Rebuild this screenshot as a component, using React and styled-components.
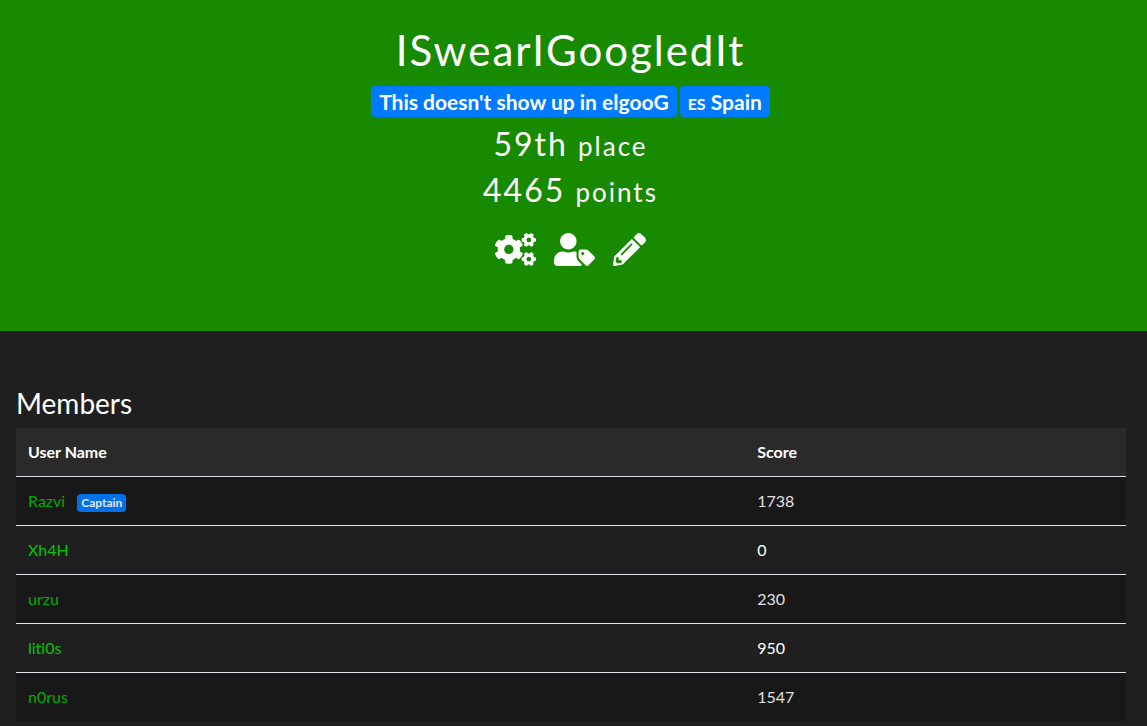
import React from "react";
import styled, { createGlobalStyle } from "styled-components";
import { FaCogs, FaUserTag, FaPencilAlt } from "react-icons/fa";

const GlobalStyle = createGlobalStyle`
  *, *::before, *::after { box-sizing: border-box; }
  body {
    margin: 0;
    background: #1f1f1f;
    color: #fff;
    font-family: Lato, "Liberation Sans", sans-serif;
    font-size: 16px;
    line-height: 24px;
    font-variant-ligatures: none;
  }
`;

const Hero = styled.header`
  display: flex;
  flex-direction: column;
  align-items: center;
  padding: 26px 22px 65px 16px;
  background: #178a00;
`;

const TeamName = styled.h1`
  margin: 0 0 12px;
  font-size: 42px;
  font-weight: 400;
  line-height: 48px;
  letter-spacing: 2px;
`;

const Badges = styled.div`
  display: flex;
  gap: 3px;
  margin-bottom: 8px;
`;

const Badge = styled.span`
  display: inline-block;
  padding: ${(p) => (p.$small ? "3px 4px" : "5px 8px")};
  border-radius: 4px;
  background: ${(p) => (p.$small ? "#0070e8" : "#007bff")};
  color: ${(p) => (p.$small ? "#e0e8f0" : "#fff")};
  font-size: ${(p) => (p.$small ? "12px" : "21px")};
  font-weight: 700;
  line-height: ${(p) => (p.$small ? "12px" : "21px")};
  white-space: nowrap;
`;

const CountryCode = styled.span`
  font-size: 16px;
  line-height: 16px;
`;

const Stat = styled.h2`
  margin: 0 0 8px;
  font-size: 32px;
  font-weight: 400;
  line-height: 38px;
  letter-spacing: 2px;
`;

const StatUnit = styled.small`
  font-size: 26px;
  line-height: 26px;
`;

const Actions = styled.nav`
  display: flex;
  gap: 18px;
  margin-top: 16px;
`;

const IconButton = styled.button`
  padding: 0;
  border: 0;
  background: none;
  color: #fff;
  cursor: pointer;

  svg {
    display: block;
    width: ${(p) => (p.$wide ? "41px" : "33px")};
    height: 33px;
  }
`;

const Content = styled.main`
  padding: 56px 21px 5px 16px;
`;

const SectionTitle = styled.h3`
  margin: 0 0 8px;
  font-size: 28px;
  font-weight: 400;
  line-height: 33px;
`;

const Table = styled.table`
  width: 100%;
  border-collapse: separate;
  border-spacing: 0;
  table-layout: fixed;
`;

const HeadCell = styled.th`
  width: ${(p) => p.$width || "auto"};
  padding: 12px;
  background: #2a2a2a;
  font-weight: 700;
  text-align: left;
`;

const Row = styled.tr`
  background: #1f1f1f;
  color: #fff;

  &:nth-child(odd) {
    background: #181818;
    color: #e0e0e0;
  }
`;

const Cell = styled.td`
  height: 49px;
  padding: 12px;
  border-top: 1px solid #dee2e6;
`;

const MemberLink = styled.a`
  margin-right: 12px;
  color: #00c800;
  text-decoration: none;

  ${Row}:nth-child(odd) & {
    color: #00ac00;
  }
`;

const members = [
  { name: "Razvi", score: 1738, captain: true },
  { name: "Xh4H", score: 0 },
  { name: "urzu", score: 230 },
  { name: "liti0s", score: 950 },
  { name: "n0rus", score: 1547 },
];

const actions = [
  { label: "Team settings", Icon: FaCogs, wide: true },
  { label: "Change captain", Icon: FaUserTag, wide: true },
  { label: "Edit team", Icon: FaPencilAlt, wide: false },
];

export default function App() {
  return (
    <>
      <GlobalStyle />
      <Hero>
        <TeamName>ISwearIGoogledIt</TeamName>
        <Badges>
          <Badge>This doesn't show up in elgooG</Badge>
          <Badge>
            <CountryCode>ES</CountryCode> Spain
          </Badge>
        </Badges>
        <Stat>
          59th <StatUnit>place</StatUnit>
        </Stat>
        <Stat>
          4465 <StatUnit>points</StatUnit>
        </Stat>
        <Actions>
          {actions.map(({ label, Icon, wide }) => (
            <IconButton key={label} type="button" aria-label={label} $wide={wide}>
              <Icon />
            </IconButton>
          ))}
        </Actions>
      </Hero>
      <Content>
        <SectionTitle>Members</SectionTitle>
        <Table>
          <thead>
            <tr>
              <HeadCell scope="col" $width="65.7%">User Name</HeadCell>
              <HeadCell scope="col">Score</HeadCell>
            </tr>
          </thead>
          <tbody>
            {members.map((m) => (
              <Row key={m.name}>
                <Cell>
                  <MemberLink href="#">{m.name}</MemberLink>
                  {m.captain && <Badge $small>Captain</Badge>}
                </Cell>
                <Cell>{m.score}</Cell>
              </Row>
            ))}
          </tbody>
        </Table>
      </Content>
    </>
  );
}
